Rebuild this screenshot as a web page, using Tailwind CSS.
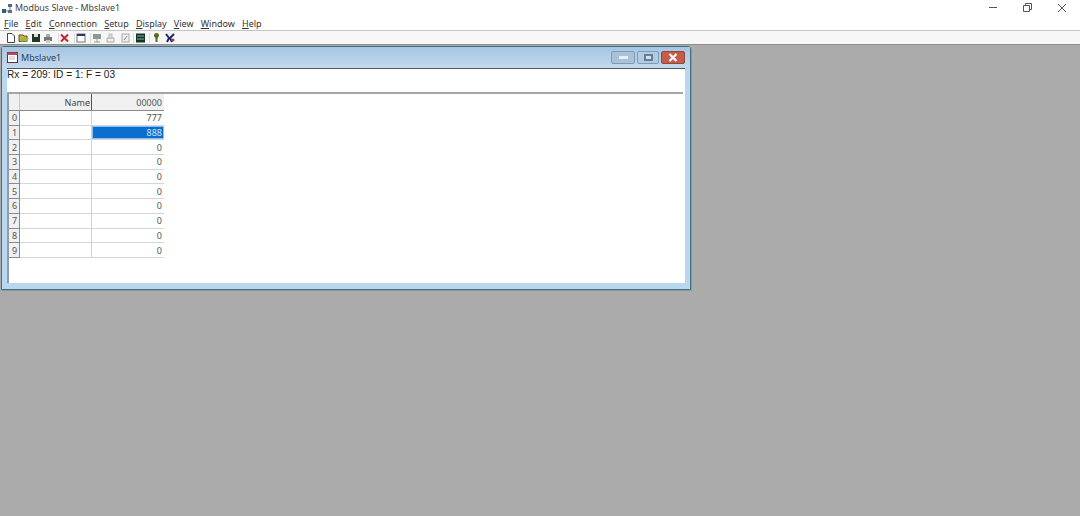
<!DOCTYPE html>
<html lang="en">
<head>
<meta charset="UTF-8" />
<title>Modbus Slave - Mbslave1</title>
<script src="https://cdn.jsdelivr.net/npm/@tailwindcss/browser@4"></script>
</head>
<body class="w-[1080px] h-[516px] overflow-hidden bg-[#ababab] font-['Noto_Sans',sans-serif] text-[#333]">

  <!-- title bar -->
  <div class="h-[16px] bg-white flex items-center pl-[2px] relative">
    <svg class="w-[11px] h-[11px]" viewBox="0 0 11 11"><rect x="0" y="6" width="4" height="4" fill="#3a5a80"/><rect x="6" y="1" width="4" height="3" fill="#4a6a90"/><rect x="6" y="7" width="4" height="3" fill="#607080"/><path d="M4 8H6M8 4V7" stroke="#777" fill="none"/></svg>
    <span class="ml-[2px] text-[8.900px] leading-none text-[#444]">Modbus Slave - Mbslave1</span>
    <div class="absolute top-0 right-0 flex">
      <svg class="w-[34px] h-[16px]" viewBox="0 0 34 16"><path d="M12 7.500H20" stroke="#555"/></svg>
      <svg class="w-[34px] h-[16px]" viewBox="0 0 34 16"><path d="M12.500 5.500H18.500V11.500H12.500ZM14.500 5V3.500H20.500V9.500H19" stroke="#555" fill="none"/></svg>
      <svg class="w-[34px] h-[16px] mr-px" viewBox="0 0 34 16"><path d="M13 4L21 12M21 4L13 12" stroke="#555"/></svg>
    </div>
  </div>

  <!-- menu -->
  <div class="h-[15px] bg-white border-b border-[#c4c4c4] flex items-center pl-[4px] gap-[7.200px] text-[9px] leading-none text-[#333]">
    <span><u>F</u>ile</span>
    <span><u>E</u>dit</span>
    <span><u>C</u>onnection</span>
    <span><u>S</u>etup</span>
    <span><u>D</u>isplay</span>
    <span><u>V</u>iew</span>
    <span><u>W</u>indow</span>
    <span><u>H</u>elp</span>
  </div>

  <!-- toolbar -->
  <div class="h-[14px] bg-[#f7f7f7] border-b border-[#8f8f8f] flex items-center pl-[6px]">
    <svg class="w-[171px] h-[12px]" viewBox="0 0 171 12">
      <path d="M1.500 1.500H6L8.500 4V10.500H1.500Z" fill="#fff" stroke="#444"/>
      <path d="M13 3H17L18 4H21V9.500H13Z" fill="#c8b04a" stroke="#5a5a20"/><path d="M14 9.500L16 6H23L21 9.500Z" fill="#9fb24e"/>
      <rect x="26" y="2" width="8" height="8" fill="#1e3a22"/><rect x="28" y="2" width="4" height="3" fill="#ddd"/>
      <path d="M38 5H46V9H38Z" fill="#777"/><rect x="40" y="2" width="4" height="3" fill="#aaa"/><rect x="40" y="8" width="4" height="3" fill="#ccc"/>
      <path d="M55 2.500L62 9.500M62 2.500L55 9.500" stroke="#c4262e" stroke-width="2"/>
      <rect x="71" y="2" width="8" height="8" fill="#fff" stroke="#777"/><rect x="71" y="2" width="8" height="2" fill="#2c3570"/>
      <rect x="87" y="2" width="8" height="5" fill="#8d9a8d"/><path d="M91 7V10M88 10H94" stroke="#999"/>
      <path d="M101 6H108V10H101Z" fill="#eee" stroke="#aaa"/><rect x="103" y="2" width="3" height="4" fill="#ddd" stroke="#bbb"/>
      <rect x="116" y="2" width="7" height="8" fill="#eee" stroke="#aaa"/><path d="M118 8L121 4" stroke="#888"/>
      <rect x="130" y="1.500" width="9" height="9" fill="#16352a"/><path d="M131 4H138M131 7H138" stroke="#6fbf8f"/>
      <path d="M148 3.500A2.500 2.500 0 0 1 153 3.500C153 5 151.500 5 151.500 7V10H149.500V7C149.500 5 148 5 148 3.500Z" fill="#5a6a20"/>
      <path d="M160 2L163 6L161 10M168 2L164 6L166 10" stroke="#1d2a6a" stroke-width="2" fill="none"/><circle cx="167" cy="8" r="1.500" fill="#b03a4a"/>
      <path d="M52.500 1V11M68.500 1V11M84.500 1V11M127.500 1V11M143.500 1V11" stroke="#ddd"/>
    </svg>
  </div>

  <!-- child window -->
  <div class="ml-[1px] mt-px w-[690px] h-[244px] border border-[#3f6f80] rounded-t-[3px] bg-[#b9d7ee] flex flex-col shadow-[1px_1px_0_#8a9a9a]">
    <div class="h-[21px] shrink-0 bg-gradient-to-b from-[#a6c6e4] to-[#c2d9ee] flex items-center pl-[5px] pr-[5px]">
      <svg class="w-[11px] h-[11px]" viewBox="0 0 11 11"><rect x="0.500" y="0.500" width="10" height="10" fill="#fff" stroke="#6a2a3a"/><rect x="0.500" y="0.500" width="10" height="2.500" fill="#b84a5a"/><path d="M2 5H8M2 7H8" stroke="#bbb"/></svg>
      <span class="ml-[3px] text-[9px] leading-none text-[#2f3f50]">Mbslave1</span>
      <div class="ml-auto flex gap-[2px]">
        <div class="w-[24px] h-[13px] border border-[#7f9ab4] rounded-[2px] bg-[#a9c2da] flex items-center justify-center"><div class="w-[9px] h-[3px] bg-[#e8eef4]"></div></div>
        <div class="w-[22px] h-[13px] border border-[#7f9ab4] rounded-[2px] bg-[#b3cbe1] flex items-center justify-center"><div class="w-[9px] h-[7px] border-2 border-[#667f99] bg-[#d4e2ee]"></div></div>
        <div class="w-[24px] h-[13px] border border-[#8f4a40] rounded-[2px] bg-[#c75a48] flex items-center justify-center">
          <svg class="w-[10px] h-[9px]" viewBox="0 0 10 9"><path d="M1.500 1L8.500 8M8.500 1L1.500 8" stroke="#fff" stroke-width="2.200"/></svg>
        </div>
      </div>
    </div>

    <div class="flex-1 mx-[5px] mb-[6px] bg-white border-t border-[#555] flex flex-col">
      <div class="h-[25px] shrink-0 pt-px text-[10.100px] leading-[10px] font-['Liberation_Sans',sans-serif] text-[#222] border-b-2 border-[#a5a5a5] mr-[2px]">Rx = 209: ID = 1: F = 03</div>

      <!-- grid -->
      <div class="flex-1 border-l-2 border-[#8f9ba6] w-[157px] text-[9px] leading-none text-[#555]">
        <div class="grid grid-cols-[11px_72px_72px] h-[17px] bg-[#f0f0f0] border-b border-[#8a8a8a]">
          <div class="border-r border-[#c8c8c8]"></div>
          <div class="border-r border-[#555] flex items-center justify-end pr-px text-[#444]">Name</div>
          <div class="flex items-center justify-end pr-[2px]">00000</div>
        </div>
        <div class="grid grid-cols-[11px_72px_72px] h-[14.700px] border-b border-[#d6d6d6]"><div class="bg-[#f0f0f0] border-r border-b border-[#8a8a8a] -mb-px pl-[3px] flex items-center">0</div><div class="border-r border-[#d0d0d0]"></div><div class="flex items-center justify-end pr-[2px]">777</div></div>
        <div class="grid grid-cols-[11px_72px_72px] h-[14.700px] border-b border-[#d6d6d6]"><div class="bg-[#f0f0f0] border-r border-b border-[#8a8a8a] -mb-px pl-[3px] flex items-center">1</div><div class="border-r border-[#d0d0d0]"></div><div class="flex items-center justify-end pr-px bg-[#0a6fd0] border border-[#8ec0ee] text-[#cfe4f8]">888</div></div>
        <div class="grid grid-cols-[11px_72px_72px] h-[14.700px] border-b border-[#d6d6d6]"><div class="bg-[#f0f0f0] border-r border-b border-[#8a8a8a] -mb-px pl-[3px] flex items-center">2</div><div class="border-r border-[#d0d0d0]"></div><div class="flex items-center justify-end pr-[2px]">0</div></div>
        <div class="grid grid-cols-[11px_72px_72px] h-[14.700px] border-b border-[#d6d6d6]"><div class="bg-[#f0f0f0] border-r border-b border-[#8a8a8a] -mb-px pl-[3px] flex items-center">3</div><div class="border-r border-[#d0d0d0]"></div><div class="flex items-center justify-end pr-[2px]">0</div></div>
        <div class="grid grid-cols-[11px_72px_72px] h-[14.700px] border-b border-[#d6d6d6]"><div class="bg-[#f0f0f0] border-r border-b border-[#8a8a8a] -mb-px pl-[3px] flex items-center">4</div><div class="border-r border-[#d0d0d0]"></div><div class="flex items-center justify-end pr-[2px]">0</div></div>
        <div class="grid grid-cols-[11px_72px_72px] h-[14.700px] border-b border-[#d6d6d6]"><div class="bg-[#f0f0f0] border-r border-b border-[#8a8a8a] -mb-px pl-[3px] flex items-center">5</div><div class="border-r border-[#d0d0d0]"></div><div class="flex items-center justify-end pr-[2px]">0</div></div>
        <div class="grid grid-cols-[11px_72px_72px] h-[14.700px] border-b border-[#d6d6d6]"><div class="bg-[#f0f0f0] border-r border-b border-[#8a8a8a] -mb-px pl-[3px] flex items-center">6</div><div class="border-r border-[#d0d0d0]"></div><div class="flex items-center justify-end pr-[2px]">0</div></div>
        <div class="grid grid-cols-[11px_72px_72px] h-[14.700px] border-b border-[#d6d6d6]"><div class="bg-[#f0f0f0] border-r border-b border-[#8a8a8a] -mb-px pl-[3px] flex items-center">7</div><div class="border-r border-[#d0d0d0]"></div><div class="flex items-center justify-end pr-[2px]">0</div></div>
        <div class="grid grid-cols-[11px_72px_72px] h-[14.700px] border-b border-[#d6d6d6]"><div class="bg-[#f0f0f0] border-r border-b border-[#8a8a8a] -mb-px pl-[3px] flex items-center">8</div><div class="border-r border-[#d0d0d0]"></div><div class="flex items-center justify-end pr-[2px]">0</div></div>
        <div class="grid grid-cols-[11px_72px_72px] h-[14.700px] border-b border-[#d6d6d6]"><div class="bg-[#f0f0f0] border-r border-b border-[#8a8a8a] -mb-px pl-[3px] flex items-center">9</div><div class="border-r border-[#d0d0d0]"></div><div class="flex items-center justify-end pr-[2px]">0</div></div>
      </div>
    </div>
  </div>
</body>
</html>
